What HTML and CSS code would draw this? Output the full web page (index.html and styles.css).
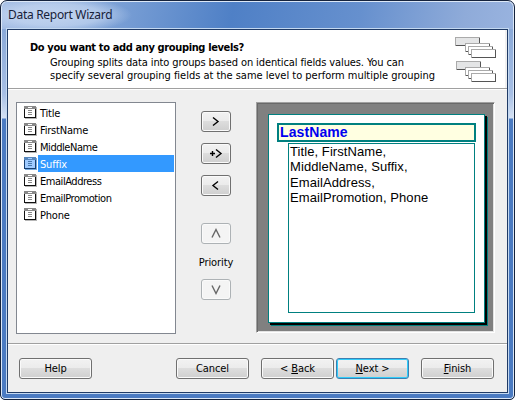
FILE: index.html
```html
<!DOCTYPE html>
<html lang="en">
<head>
<meta charset="utf-8">
<title>Data Report Wizard</title>
<link rel="stylesheet" href="styles.css">
</head>
<body>
<svg width="0" height="0" class="defs">
  <symbol id="field" viewBox="0 0 13 13">
    <path fill="#b5b5b5" d="M1 1h12v12H1z"/>
    <path fill="#111" d="M0 3h12v9H0z"/>
    <path fill="#fff" d="M1 3h10v8H1z"/>
    <path fill="#888" d="M0 0h12v3H0z"/>
    <path fill="#fff" d="M4 1h4v1H4z"/>
    <path fill="#888" d="M4 4h4v1H4zM4 6h4v1H4zM4 8h4v1H4z"/>
  </symbol>
  <symbol id="field-selected" viewBox="0 0 13 13">
    <path fill="#75a9dc" d="M1 1h12v12H1z"/>
    <path fill="#173f70" d="M0 3h12v9H0z"/>
    <path fill="#9fcbff" d="M1 3h10v8H1z"/>
    <path fill="#5887bc" d="M0 0h12v3H0z"/>
    <path fill="#9fcbff" d="M4 1h4v1H4z"/>
    <path fill="#4779af" d="M4 4h4v1H4zM4 6h4v1H4zM4 8h4v1H4z"/>
  </symbol>
  <symbol id="card" viewBox="0 0 25 9">
    <path fill="#555" d="M0 0h25v9H0z"/>
    <path fill="#aaa" d="M0 0h25v1H1v8H0z"/>
    <path fill="currentColor" d="M1 1h23v7H1z"/>
  </symbol>
</svg>
<div class="window">
  <div class="titlebar"><span class="t title">Data Report Wizard</span></div>
  <div class="client">
    <header class="header">
      <div class="copy">
        <h1><span class="t">Do you want to add any grouping levels?</span></h1>
        <p><span class="t line1">Grouping splits data into groups based on identical fields values. You can</span><br><span class="t line2">specify several grouping fields at the same level to perform multiple grouping</span></p>
      </div>
      <svg class="cards" width="41" height="45" viewBox="0 0 41 45">
        <use href="#card" x="0" y="0" width="25" height="9" color="#e4e5e6"/>
        <use href="#card" x="10" y="6" width="25" height="9" color="#fff"/>
        <use href="#card" x="13" y="9" width="25" height="9" color="#fff"/>
        <use href="#card" x="16" y="12" width="25" height="9" color="#fff"/>
        <use href="#card" x="1" y="24" width="25" height="9" color="#e4e5e6"/>
        <use href="#card" x="10" y="30" width="25" height="9" color="#fff"/>
        <use href="#card" x="13" y="33" width="25" height="9" color="#fff"/>
        <use href="#card" x="16" y="36" width="25" height="9" color="#fff"/>
      </svg>
    </header>
    <main class="content">
      <ul class="fields">
        <li><svg><use href="#field" width="13" height="13"/></svg><span class="t">Title</span></li>
        <li><svg><use href="#field" width="13" height="13"/></svg><span class="t">FirstName</span></li>
        <li><svg><use href="#field" width="13" height="13"/></svg><span class="t tight">MiddleName</span></li>
        <li class="selected"><svg><use href="#field-selected" width="13" height="13"/></svg><span class="t">Suffix</span></li>
        <li><svg><use href="#field" width="13" height="13"/></svg><span class="t tight">EmailAddress</span></li>
        <li><svg><use href="#field" width="13" height="13"/></svg><span class="t tight">EmailPromotion</span></li>
        <li><svg><use href="#field" width="13" height="13"/></svg><span class="t">Phone</span></li>
      </ul>
      <div class="controls">
        <button aria-label="Add"><svg viewBox="0 0 30 21"><path d="M12 6.5l5 4-5 4"/></svg></button>
        <button aria-label="Add to level"><svg viewBox="0 0 30 21"><path d="M9 10.5h5M11.5 8v5M15 6.5l5 4-5 4"/></svg></button>
        <button aria-label="Remove"><svg viewBox="0 0 30 21"><path d="M17 6.5l-5 4 5 4"/></svg></button>
        <button class="off up" aria-label="Raise"><svg viewBox="0 0 30 21"><path d="M11 14.5l4-8 4 8"/></svg></button>
        <div class="priority"><span class="t">Priority</span></div>
        <button class="off" aria-label="Lower"><svg viewBox="0 0 30 21"><path d="M11 6.5l4 8 4-8"/></svg></button>
      </div>
      <div class="preview">
        <div class="sheet">
          <div class="group"><span class="t">LastName</span></div>
          <div class="detail">Title, FirstName,<br>MiddleName, Suffix,<br>EmailAddress,<br>EmailPromotion, Phone</div>
        </div>
      </div>
    </main>
    <footer class="footer">
      <button class="help"><span class="t">Help</span></button>
      <button class="cancel"><span class="t">Cancel</span></button>
      <button class="back"><span class="t">&lt; <u>B</u>ack</span></button>
      <button class="next"><span class="t"><u>N</u>ext &gt;</span></button>
      <button class="finish"><span class="t"><u>F</u>inish</span></button>
    </footer>
  </div>
</div>
</body>
</html>
```
FILE: styles.css
```css
* { box-sizing: border-box; }
body {
  margin: 0;
  width: 515px;
  height: 400px;
  overflow: hidden;
  background: #fff;
  color: #000;
  font: 11px/13px "DejaVu Sans Condensed", "DejaVu Sans", sans-serif;
}
.defs { position: absolute; }
.t { display: inline-block; white-space: nowrap; }
.window {
  width: 515px;
  height: 400px;
  border: 1px solid #15233d;
  border-radius: 7px 7px 5px 5px;
  box-shadow: inset 0 0 0 1px #dce8f7;
  padding: 0 6px 6px;
  background:
    radial-gradient(ellipse 75px 18px at 56px 14px, rgba(205, 221, 244, .8) 0, rgba(205, 221, 244, .6) 60%, rgba(205, 221, 244, 0) 100%),
    linear-gradient(#8aa9d8 0, #a7bfe5 65px, #d5e1f3 89px, #4b7bc2 90px, #4b7bc2 100%) 0 28px / 100% 100% no-repeat,
    linear-gradient(100deg, #a6bfe5 0, #749bd3 23%, #4f80c6 40%, #6690ce 62%, #8fabd9 80%, #9ab4e0 90%, #7196d0 100%);
}
.titlebar { height: 27px; padding: 6px 0 0 1px; }
.title {
  font: 12px/15px "Noto Sans", sans-serif;
  color: #172139;
  letter-spacing: -.3px;
}
.client {
  height: 364px;
  width: 501px;
  border: 1px solid #203b66;
  outline: 1px solid #c4d9f1;
  margin: 1px 0 0;
  background: #efefef;
}
.header {
  display: flex;
  height: 59px;
  background: #fff;
  border-bottom: 1px solid #a0a0a0;
  box-shadow: 0 1px #fff, inset -2px 0 #f0f0f0;
}
.copy { width: 447px; padding: 11px 0 0 22px; }
h1 { margin: 0; font: bold 11px/13px "DejaVu Sans Condensed", sans-serif; letter-spacing: -.37px; }
p { margin: 2px 0 0 20px; line-height: 13px; }
.line1 { letter-spacing: -.11px; }
.line2 { letter-spacing: -.02px; }
.cards { margin-top: 7px; }
.content { display: flex; height: 254px; padding: 13px 0 0 8px; }
.fields {
  list-style: none;
  margin: 0;
  padding: 1px;
  width: 160px;
  height: 232px;
  border: 1px solid #828790;
  background: #fff;
}
.fields li { display: flex; height: 17px; padding-left: 6px; line-height: 19px; letter-spacing: -.2px; }
.fields svg { width: 13px; height: 13px; margin: 2px 1px 0 0; flex: none; }
.fields .t { flex: 1; height: 17px; padding: 0 0 0 2px; }
.fields .tight { letter-spacing: -.45px; }
.selected .t { background: #3399ff; color: #fff; }
button {
  display: flex;
  align-items: center;
  justify-content: center;
  width: 73px;
  height: 21px;
  padding: 0;
  font: inherit;
  color: #000;
  border: 1px solid #707070;
  border-radius: 3px;
  background: linear-gradient(#f2f2f2 0, #ebebeb 49%, #dddddd 50%, #cfcfcf 100%);
  box-shadow: inset 0 0 0 1px #fafafa;
}
.controls { width: 30px; margin: 9px 25px 0; }
.controls button { width: 30px; margin-bottom: 11px; }
.controls svg { width: 30px; height: 21px; flex: none; fill: none; stroke: #000; stroke-width: 1.4; }
.controls .up { margin: 27px 0 0; }
.controls .off { border-color: #adb2b5; background: #f4f4f4; }
.controls .off svg { stroke: #666; }
.priority { display: flex; justify-content: center; height: 35px; padding-top: 12px; letter-spacing: -.1px; }
.preview {
  width: 239px;
  height: 231px;
  padding: 11px;
  background: #808080;
  border: 1px solid;
  border-color: #a0a0a0 #fff #fff #a0a0a0;
  box-shadow: inset 1px 1px #696969, inset -1px -1px #e3e3e3;
}
.sheet {
  width: 217px;
  height: 209px;
  padding: 8px;
  background: #fff;
  border: 1px solid #008080;
  box-shadow: 2px 2px #000, 3px 3px #008080;
}
.group {
  width: 199px;
  height: 19px;
  border: 2px solid #008080;
  padding-left: 1px;
  background: #ffffe1;
  color: #0000f0;
  font: bold 14px/15px "Liberation Sans", sans-serif;
  letter-spacing: .1px;
}
.detail {
  width: 187px;
  height: 170px;
  margin: 1px 0 0 11px;
  padding-left: 1px;
  border: 1px solid #008080;
  font: 13px/15.4px "Liberation Sans", sans-serif;
  letter-spacing: .08px;
}
.footer {
  display: flex;
  height: 49px;
  padding: 14px 0 0 11px;
  border-top: 1px solid #a0a0a0;
  box-shadow: inset 0 1px #fff;
}
.footer .t { letter-spacing: -.1px; }
.cancel { margin-left: 84px; }
.back { margin-left: 12px; }
.next { margin-left: 2px; border-color: #3c7fb1; box-shadow: inset 0 0 0 1px #30ccfa; }
.finish { margin-left: 12px; }
u { text-underline-offset: 1px; }
```
